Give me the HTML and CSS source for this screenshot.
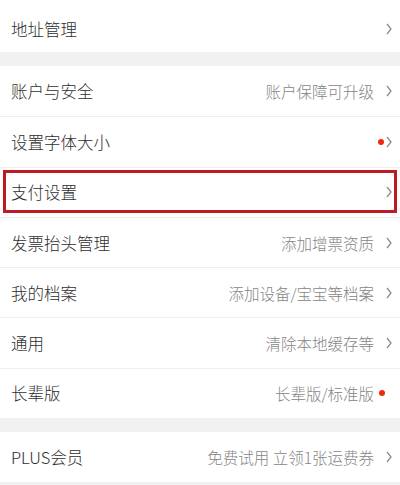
FILE: index.html
```html
<!DOCTYPE html>
<html lang="zh-CN">

<head>
    <meta charset="utf-8">
    <meta name="viewport" content="width=device-width, initial-scale=1.0">
    <title>设置</title>
    <link rel="stylesheet" href="styles.css">
</head>

<body>

    <section class="kort">
        <div class="raekke forste">
            <span class="navn">地址管理</span>
            <span class="hoejre">
                <svg class="pil" viewBox="0 0 6 12"><polyline points="1,1 5,6 1,11" /></svg>
            </span>
        </div>
    </section>

    <section class="kort">
        <div class="raekke">
            <span class="navn">账户与安全</span>
            <span class="hoejre">
                <span class="vaerdi">账户保障可升级</span>
                <svg class="pil" viewBox="0 0 6 12"><polyline points="1,1 5,6 1,11" /></svg>
            </span>
        </div>
        <div class="raekke">
            <span class="navn">设置字体大小</span>
            <span class="hoejre">
                <span class="prik"></span>
                <svg class="pil taet" viewBox="0 0 6 12"><polyline points="1,1 5,6 1,11" /></svg>
            </span>
        </div>
        <div class="raekke valgt">
            <span class="navn">支付设置</span>
            <span class="hoejre">
                <svg class="pil" viewBox="0 0 6 12"><polyline points="1,1 5,6 1,11" /></svg>
            </span>
            <div class="ramme"></div>
        </div>
        <div class="raekke">
            <span class="navn">发票抬头管理</span>
            <span class="hoejre">
                <span class="vaerdi">添加增票资质</span>
                <svg class="pil" viewBox="0 0 6 12"><polyline points="1,1 5,6 1,11" /></svg>
            </span>
        </div>
        <div class="raekke">
            <span class="navn">我的档案</span>
            <span class="hoejre">
                <span class="vaerdi">添加设备/宝宝等档案</span>
                <svg class="pil" viewBox="0 0 6 12"><polyline points="1,1 5,6 1,11" /></svg>
            </span>
        </div>
        <div class="raekke">
            <span class="navn">通用</span>
            <span class="hoejre">
                <span class="vaerdi">清除本地缓存等</span>
                <svg class="pil" viewBox="0 0 6 12"><polyline points="1,1 5,6 1,11" /></svg>
            </span>
        </div>
        <div class="raekke">
            <span class="navn">长辈版</span>
            <span class="hoejre">
                <span class="vaerdi">长辈版/标准版</span>
                <span class="prik alene"></span>
            </span>
        </div>
    </section>

    <section class="kort">
        <div class="raekke">
            <span class="navn">PLUS会员</span>
            <span class="hoejre">
                <span class="vaerdi">免费试用 立领1张运费券</span>
                <svg class="pil" viewBox="0 0 6 12"><polyline points="1,1 5,6 1,11" /></svg>
            </span>
        </div>
    </section>

</body></html>
```

FILE: styles.css
```css
body {
    margin: 0;
    background-color: #f1f1f1;
    font-family: "Noto Sans CJK SC", "Noto Sans", sans-serif;
    font-weight: 300;
    overflow: hidden;
}

.kort {
    background-color: #ffffff;
    margin-bottom: 14px;
}

.raekke {
    position: relative;
    display: flex;
    align-items: center;
    justify-content: space-between;
    box-sizing: border-box;
    height: 50.3px;
    padding: 0 8px 0 11px;
    border-top: 1px solid #efefef;
}

.raekke:first-child {
    border-top: none;
}

.forste {
    height: 52px;
    padding-top: 6px;
}

.navn {
    font-size: 16.5px;
    color: #2e2e2e;
}

.hoejre {
    display: flex;
    align-items: center;
}

.vaerdi {
    font-size: 15.5px;
    color: #858585;
}

.pil {
    width: 6px;
    height: 12px;
    margin-left: 12px;
    fill: none;
    stroke: #8e8e8e;
    stroke-width: 1.3;
}

.pil.taet {
    margin-left: 2px;
}

.prik {
    width: 6px;
    height: 6px;
    border-radius: 50%;
    background-color: #f2270c;
}

.prik.alene {
    margin-left: 5px;
    margin-right: 7px;
}

/* markering rundt om betaling */
.ramme {
    position: absolute;
    left: 3px;
    right: 3px;
    top: 2px;
    bottom: 4px;
    border: 3px solid #bb1d22;
}
```
